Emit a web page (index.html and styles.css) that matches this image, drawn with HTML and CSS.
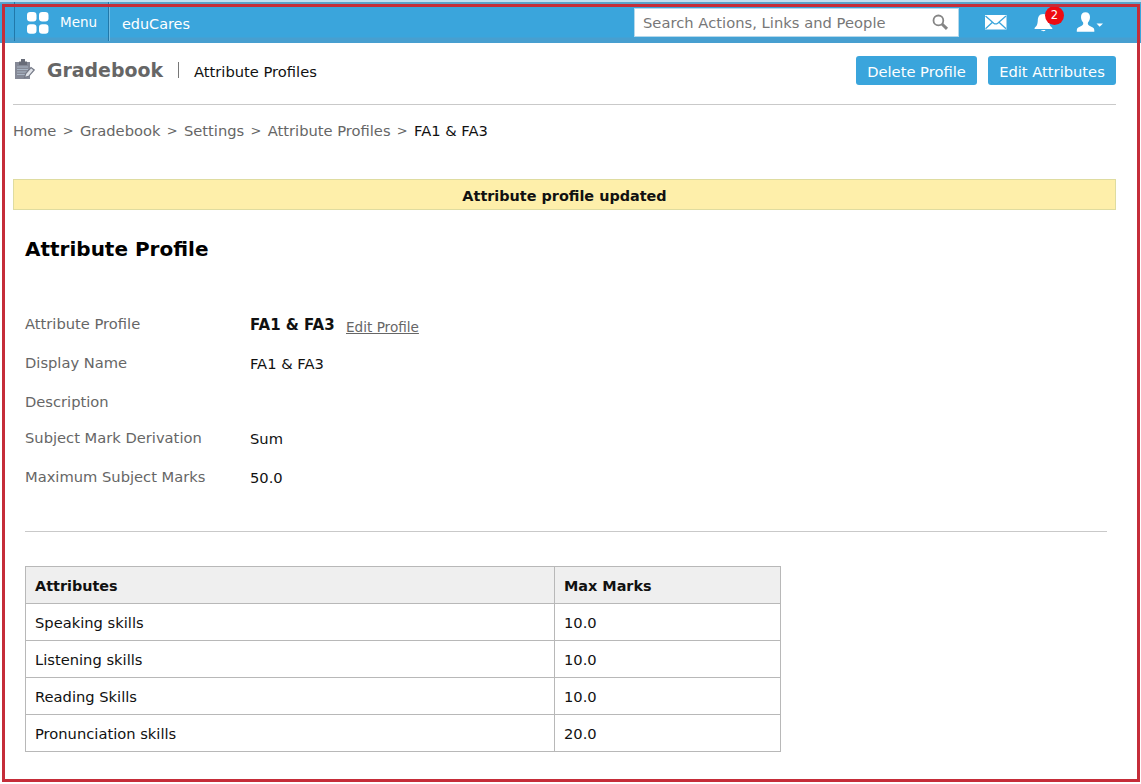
FILE: index.html
```html
<!DOCTYPE html>
<html lang="en">
<head>
<meta charset="utf-8">
<title>Attribute Profile</title>
<link rel="stylesheet" href="styles.css">
</head>
<body>
<div class="app">
  <header class="topbar">
    <a class="menu">
      <svg class="menu-icon" width="22" height="22" viewBox="0 0 22 22" fill="#fff"><rect width="9.5" height="9.5" rx="3.2"/><rect x="12" width="9.5" height="9.5" rx="3.2"/><rect y="12.2" width="9.5" height="9.5" rx="3.2"/><rect x="12" y="12.2" width="9.5" height="9.5" rx="3.2"/></svg>
      <span>Menu</span>
    </a>
    <span class="brand">eduCares</span>
    <div class="search">
      <span class="search-text">Search Actions, Links and People</span>
      <svg width="17" height="17" viewBox="0 0 17 17" fill="none" stroke="#858585"><circle cx="6.4" cy="6.4" r="4.9" stroke-width="1.8"/><path d="M10 10l5 4.8" stroke-width="3"/></svg>
    </div>
    <svg class="mail" width="22" height="15" viewBox="0 0 22 15"><rect width="21.5" height="14.5" fill="#fff"/><path d="M.5 1l8.2 7.2q2 1.5 4 0L21 1M.5 13.8l7-6.5M21 13.8l-7-6.5" fill="none" stroke="#3aa5dc" stroke-width="1.3"/></svg>
    <div class="bell">
      <svg width="19" height="18" viewBox="0 0 19 18" fill="#fff"><path d="M9.2 0C5.2 0 4 3 3.8 6.3 3.6 9.8 3.3 11.6.6 14v1h17.7v-1c-2.8-2.4-3.1-4.2-3.3-7.7C14.7 3 13.2 0 9.2 0zM7.2 16h4.3c-.5 1.6-3.8 1.6-4.3 0z"/></svg>
      <span class="badge">2</span>
    </div>
    <svg class="user" width="28" height="21" viewBox="0 0 28 21" fill="#fff"><path d="M9.5.3C6.600.3 5 2.200 5 5c0 2.200.8 4 2 5.200.6 1.500.2 2.800-1.300 3.500C3 15 .8 15.700.8 18v1.700h17.500V18c0-2.300-2.200-3-4.900-4.300-1.500-.7-1.900-2-1.300-3.500C13.300 9 14 7.200 14 5c0-2.800-1.700-4.700-4.500-4.700z"/><path d="M20.500 11.500h6.500L23.700 14.800z"/></svg>
  </header>

  <main class="page">
    <div class="title-row">
      <svg class="book-icon" width="20" height="22" viewBox="0 0 20 22"><path d="M0 3h15v17H0z" fill="#858996"/><path d="M6 0h4v2.500h2V6H4V2.500h2z" fill="#686c78"/><path d="M2 8h11M2 10.500h11M2 13h10M2 15.500h8" stroke="#a9b5c4" stroke-width="1"/><path d="M9.500 18.500l1.200-4L16 8.500l3.200 2.500-5.500 6.300z" fill="#dfe2e8" stroke="#747986" stroke-width="1.200"/></svg>
      <h1 class="module">Gradebook</h1>
      <span class="bar"></span>
      <span class="subtitle">Attribute Profiles</span>
      <div class="actions"><a class="btn btn-delete">Delete Profile</a><a class="btn btn-edit">Edit Attributes</a></div>
    </div>
    <nav class="crumbs"><a>Home</a><i>&gt;</i><a>Gradebook</a><i>&gt;</i><a>Settings</a><i>&gt;</i><a>Attribute Profiles</a><i>&gt;</i><b>FA1 &amp; FA3</b></nav>
    <div class="notice">Attribute profile updated</div>
    <section class="content">
      <h2 class="heading">Attribute Profile</h2>
      <dl class="details">
        <dt>Attribute Profile</dt><dd><strong>FA1 &amp; FA3</strong><a class="edit">Edit Profile</a></dd>
        <dt>Display Name</dt><dd>FA1 &amp; FA3</dd>
        <dt>Description</dt><dd></dd>
        <dt>Subject Mark Derivation</dt><dd>Sum</dd>
        <dt>Maximum Subject Marks</dt><dd>50.0</dd>
      </dl>
      <table class="marks">
        <tr><th class="name">Attributes</th><th>Max Marks</th></tr>
        <tr><td>Speaking skills</td><td>10.0</td></tr>
        <tr><td>Listening skills</td><td>10.0</td></tr>
        <tr><td>Reading Skills</td><td>10.0</td></tr>
        <tr><td>Pronunciation skills</td><td>20.0</td></tr>
      </table>
    </section>
  </main>
  <div class="frame"></div>
</div>
</body>
</html>
```
FILE: styles.css
```css
* { box-sizing: border-box; }
body { margin: 0; background: #fff; font: 14.7px "DejaVu Sans", Verdana, sans-serif; color: #111; }
.app { position: relative; width: 1141px; height: 784px; overflow: hidden; border-top: 2px solid #c3dff0; }
.topbar { display: flex; align-items: flex-start; height: 41px; padding-left: 14px; color: #fff; background: linear-gradient(#5ba3cb 0, #5ba3cb 2px, #3aa5dc 2px, #3aa5dc 35px, #479fd0 36px, #479fd0 100%); }
.menu { display: flex; width: 95px; height: 39px; padding-left: 12px; border-left: 1px solid #2178a9; border-right: 1px solid #2178a9; box-shadow: 1px 0 #70bde4; font-size: 13.5px; line-height: 40px; }
.menu-icon { margin: 10px 11px 0 0; }
.brand { width: 525px; padding-left: 13px; font-size: 14.4px; line-height: 44px; }
.search { display: flex; width: 325px; height: 29px; margin-top: 6px; padding: 0 9px 0 8px; justify-content: space-between; background: #fff; border: 1px solid #b5d8eb; color: #777; line-height: 27px; white-space: nowrap; }
.search-text { letter-spacing: .03px; }
.search svg { margin-top: 5px; }
.mail { margin: 13px 0 0 26px; }
.bell { position: relative; width: 19px; height: 18px; margin: 12px 0 0 27px; }
.bell svg { display: block; }
.badge { position: absolute; left: 11px; top: -8px; width: 19px; height: 19px; border-radius: 50%; background: #ee0b12; font-size: 11.5px; line-height: 19px; text-align: center; }
.user { margin: 10px 0 0 23px; }
.page { width: 1103px; margin-left: 13px; }
.title-row { display: flex; height: 62px; border-bottom: 1px solid #c9c9c9; line-height: 57px; }
.book-icon { margin: 16px 0 0 2px; }
.module { margin: 0 0 0 12px; width: 117px; font-size: 18.9px; line-height: 55px; color: #666; white-space: nowrap; }
.bar { width: 1px; height: 16px; margin: 19px 15px 0 14px; background: #777; }
.subtitle { white-space: nowrap; }
.actions { display: flex; margin: 13px 0 0 auto; gap: 11px; }
.btn { height: 29px; border-radius: 3px; background: #3aa5dc; color: #fff; line-height: 31px; text-align: center; white-space: nowrap; }
.btn-delete { width: 121px; }
.btn-edit { width: 128px; }
.crumbs { display: flex; gap: 6.3px; padding-left: 0; height: 74px; line-height: 52px; color: #666; white-space: nowrap; font-size: 14.7px; }
.crumbs i { font-style: normal; font-size: 13px; }
.crumbs b { font-weight: normal; color: #111; }
.notice { height: 31px; border: 1px solid #dfdca0; background: #feefaa; color: #111; font-weight: bold; font-size: 14.4px; line-height: 32px; text-align: center; }
.content { padding: 0 9px 0 12px; }
.heading { margin: 0; font-size: 20px; line-height: 78px; height: 95px; color: #000; }
.details { display: grid; grid-template-columns: 225px 1fr; grid-template-rows: 39px 39px 36px 39px 73px; margin: 0 0 34px; border-bottom: 1px solid #c9c9c9; line-height: 37px; }
.details dt { color: #666; }
.details dd { display: flex; margin: 1px 0 0; white-space: nowrap; }
.details strong { width: 96px; font-size: 15px; line-height: 38px; }
.edit { color: #666; font-size: 13.6px; line-height: 42px; text-decoration: underline; }
.marks { width: 756px; border-collapse: collapse; table-layout: fixed; }
.marks th, .marks td { height: 37px; padding: 0 9px; border: 1px solid #b8b8b8; text-align: left; }
.marks th { padding-top: 1px; background: #efefef; font-size: 14.4px; }
.marks .name { width: 529px; }
.frame { position: absolute; left: 2px; top: 2px; width: 1138px; height: 778px; border: 3px solid #c52d39; }
```
